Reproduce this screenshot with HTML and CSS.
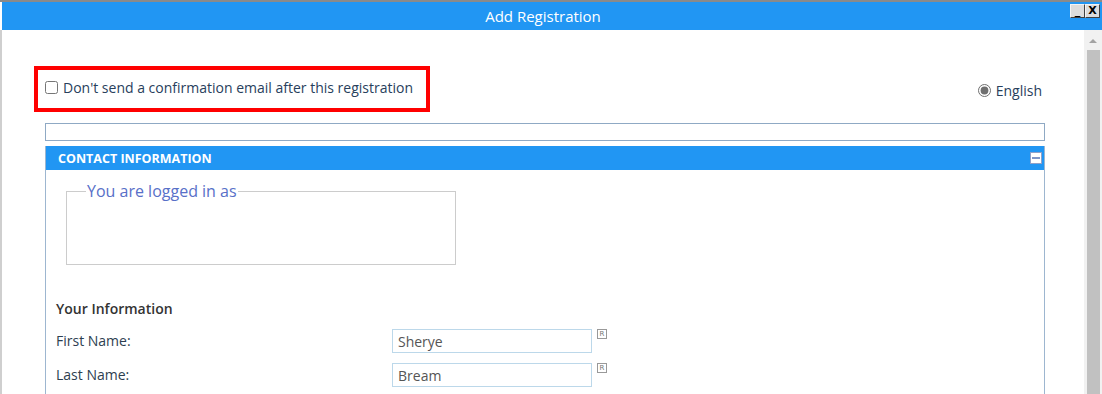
FILE: index.html
```html
<!DOCTYPE html>
<html lang="en">
<head>
    <meta charset="UTF-8">
    <meta name="viewport" content="width=device-width, initial-scale=1.0">
    <title>Add Registration</title>
    <link rel="stylesheet" href="styles.css">
</head>
<body>
    <div class="window">
        <div class="titlebar">
            <span class="title">Add Registration</span>
            <div class="win-buttons">
                <span class="win-btn">_</span>
                <span class="win-btn">X</span>
            </div>
        </div>

        <div class="frame">
            <div class="content">
                <div class="top-row">
                    <div class="highlight">
                        <label class="check-label">
                            <input type="checkbox" class="check">
                            Don't send a confirmation email after this registration
                        </label>
                    </div>
                    <label class="lang">
                        <input type="radio" name="lang" checked class="radio">
                        English
                    </label>
                </div>

                <div class="sections">
                    <div class="empty-box"></div>

                    <div class="panel">
                        <div class="panel-header">
                            <span>CONTACT INFORMATION</span>
                            <span class="collapse"></span>
                        </div>
                        <div class="panel-body">
                            <fieldset class="logged">
                                <legend>You are logged in as</legend>
                            </fieldset>

                            <h3 class="sub-title">Your Information</h3>

                            <div class="field-row">
                                <label class="field-label">First Name:</label>
                                <input type="text" class="field-input" value="Sherye">
                                <span class="req">R</span>
                            </div>
                            <div class="field-row">
                                <label class="field-label">Last Name:</label>
                                <input type="text" class="field-input" value="Bream">
                                <span class="req">R</span>
                            </div>
                        </div>
                    </div>
                </div>
            </div>

            <div class="scrollbar">
                <div class="scroll-arrow"></div>
                <div class="scroll-thumb"></div>
            </div>
        </div>
    </div>
</body>
</html>
```

FILE: styles.css
```css
body {
    margin: 0;
    font-family: "Open Sans", Arial, sans-serif;
    background: #ffffff;
    overflow: hidden;
}
.window {
    height: 394px;
    border-top: 2px solid #8a8a8a;
    display: flex;
    flex-direction: column;
    box-sizing: border-box;
    overflow: hidden;
}
.titlebar {
    position: relative;
    height: 28px;
    margin-left: 2px;
    background-color: #2196f3;
    color: white;
    display: flex;
    align-items: center;
    justify-content: center;
    padding-right: 18px;
}
.title {
    font-size: 15px;
}
.win-buttons {
    position: absolute;
    top: 2px;
    right: 2px;
    display: flex;
}
.win-btn {
    width: 13px;
    height: 12px;
    background: #dcdcdc;
    border: 1px solid #f4f4f4;
    border-right-color: #404040;
    border-bottom-color: #404040;
    color: #000;
    font-family: "DejaVu Sans", sans-serif;
    font-size: 11px;
    line-height: 12px;
    text-align: center;
    font-weight: bold;
}
.frame {
    flex: 1;
    display: flex;
    border-left: 2px solid #cfcfcf;
    min-height: 0;
}
.content {
    flex: 1;
    padding: 36px 0 0 32px;
}
.top-row {
    display: flex;
    align-items: center;
    justify-content: space-between;
    width: 1008px;
}
.highlight {
    width: 381px;
    height: 34px;
    border: 4px solid #ff0000;
    display: flex;
    align-items: center;
    padding: 0 0 4px 7px;
    box-sizing: content-box;
}
.check-label, .lang {
    display: flex;
    align-items: center;
    font-size: 14px;
    color: #28405c;
}
.check {
    width: 13px;
    height: 13px;
    margin: 0 5px 0 0;
}
.lang {
    margin-top: 3px;
}
.radio {
    width: 13px;
    height: 13px;
    margin: 0 5px 0 0;
    accent-color: #6f6f6f;
}
.sections {
    margin: 11px 0 0 11px;
    width: 1000px;
}
.empty-box {
    height: 16px;
    border: 1px solid #8fa9c4;
}
.panel {
    margin-top: 5px;
    border-left: 1px solid #9db6d0;
    border-right: 1px solid #9db6d0;
    height: 300px;
}
.panel-header {
    height: 24px;
    background-color: #2196f3;
    color: white;
    font-weight: bold;
    font-size: 12.5px;
    display: flex;
    align-items: center;
    justify-content: space-between;
    padding: 0 2px 0 12px;
}
.collapse {
    width: 10px;
    height: 10px;
    background: white;
    border: 1px solid #8fa0c8;
    position: relative;
}
.collapse::after {
    content: "";
    position: absolute;
    left: 1px;
    right: 1px;
    top: 4px;
    height: 2px;
    background: #7f96c8;
}
.panel-body {
    padding: 10px 10px 0 10px;
}
.logged {
    margin: 0 0 0 10px;
    width: 390px;
    height: 85px;
    box-sizing: border-box;
    border: 1px solid #cccccc;
    padding: 0 19px;
}
.logged legend {
    padding: 0 1px;
    color: #5870c8;
    font-size: 16px;
}
.sub-title {
    margin: 34px 0 11px;
    font-size: 14px;
    font-weight: 600;
    color: #333;
}
.field-row {
    display: flex;
    align-items: flex-start;
    height: 34px;
}
.field-label {
    width: 336px;
    font-size: 14px;
    color: #2d3e50;
    line-height: 24px;
}
.field-input {
    width: 200px;
    height: 24px;
    box-sizing: border-box;
    border: 1px solid #bcd8ea;
    padding: 0 5px;
    font-family: "Open Sans", Arial, sans-serif;
    font-size: 14px;
    color: #555;
    margin: 0;
}
.req {
    margin-left: 5px;
    width: 8px;
    height: 8px;
    border: 1px solid #999;
    font-size: 7px;
    line-height: 8px;
    text-align: center;
    color: #777;
    font-family: "DejaVu Sans", sans-serif;
}
.scrollbar {
    width: 18px;
    background: #f1f1f1;
    display: flex;
    flex-direction: column;
    align-items: center;
    padding-top: 2px;
}
.scroll-arrow {
    width: 0;
    height: 0;
    margin: 7px 0 7px;
    border-left: 4px solid transparent;
    border-right: 4px solid transparent;
    border-bottom: 4px solid #a3a3a3;
}
.scroll-thumb {
    width: 13px;
    flex: 1;
    background: #c1c1c1;
}
```
